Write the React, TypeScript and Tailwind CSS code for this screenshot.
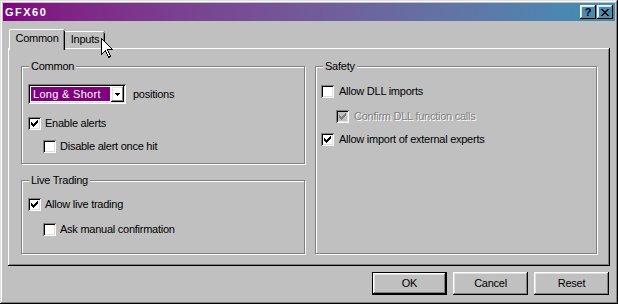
import React from 'react';

const raised = 'shadow-[inset_-1px_-1px_#000,inset_1px_1px_#fff,inset_-2px_-2px_#808080,inset_2px_2px_#dfdfdf]';
const sunken = 'shadow-[inset_1px_1px_#808080,inset_-1px_-1px_#fff,inset_2px_2px_#000,inset_-2px_-2px_#dfdfdf]';

const Check: React.FC<{ checked?: boolean; disabled?: boolean }> = ({ checked, disabled }) => (
  <span
    className={`w-[13px] h-[13px] shrink-0 flex items-center justify-center ${sunken} ${disabled ? 'bg-[#c0c0c0]' : 'bg-white'}`}
  >
    {checked && (
      <svg width="7" height="7" viewBox="0 0 7 7" shapeRendering="crispEdges">
        <path
          fill={disabled ? '#808080' : '#000'}
          d="M6 0h1v1h-1z M5 1h2v1h-2z M0 2h1v1h-1z M4 2h3v1h-3z M0 3h2v1h-2z M3 3h3v1h-3z M0 4h5v1h-5z M1 5h3v1h-3z M2 6h1v1h-1z"
        />
      </svg>
    )}
  </span>
);

const CheckRow: React.FC<{
  label: string;
  checked?: boolean;
  disabled?: boolean;
  className?: string;
}> = ({ label, checked, disabled, className = '' }) => (
  <div className={`flex items-center h-[13px] ${className}`}>
    <Check checked={checked} disabled={disabled} />
    <span className={disabled ? 'text-[#808080] [text-shadow:1px_1px_0_#fff]' : ''}>{label}</span>
  </div>
);

const GroupBox: React.FC<{ label: string; className?: string; children: React.ReactNode }> = ({
  label,
  className = '',
  children,
}) => (
  <div className={`relative border border-[#808080] shadow-[1px_1px_0_#fff,inset_1px_1px_0_#fff] ${className}`}>
    <span className="absolute -top-[7px] left-[7px] px-[2px] bg-[#c0c0c0]">{label}</span>
    {children}
  </div>
);

const Button: React.FC<{ label: string; primary?: boolean }> = ({ label, primary }) =>
  primary ? (
    <div className="w-[75px] h-[23px] border border-black">
      <div className={`w-full h-full flex items-center justify-center ${raised}`}>{label}</div>
    </div>
  ) : (
    <div className={`w-[75px] h-[23px] flex items-center justify-center ${raised}`}>{label}</div>
  );

export default function App() {
  return (
    <div className="relative w-[618px] h-[304px] bg-[#c0c0c0] p-[3px] flex flex-col font-['Liberation_Sans',Arial,sans-serif] text-[11px] leading-[13px] tracking-[-0.25px] text-black shadow-[inset_-1px_-1px_#000,inset_1px_1px_#dfdfdf,inset_-2px_-2px_#808080,inset_2px_2px_#fff]">
      {/* Title bar */}
      <div className="h-[18px] flex items-center justify-between pl-[2px] pr-[2px] bg-linear-to-r from-[#800080] to-[#3a90b4]">
        <span className="text-white font-bold tracking-[1.5px]">GFX60</span>
        <div className="flex gap-[1px]">
          <div className={`w-[16px] h-[14px] flex items-center justify-center font-bold text-[11px] leading-none tracking-normal ${raised}`}>
            ?
          </div>
          <div className={`w-[16px] h-[14px] flex items-center justify-center ${raised}`}>
            <svg width="8" height="7" viewBox="0 0 8 7" shapeRendering="crispEdges">
              <path
                fill="#000"
                d="M0 0h2v1h-2z M6 0h2v1h-2z M1 1h2v1h-2z M5 1h2v1h-2z M2 2h4v1h-4z M3 3h2v1h-2z M2 4h4v1h-4z M1 5h2v1h-2z M5 5h2v1h-2z M0 6h2v1h-2z M6 6h2v1h-2z"
              />
            </svg>
          </div>
        </div>
      </div>

      <div className="flex flex-col px-[5px]">
        {/* Tabs */}
        <div className="mt-[8px] h-[19px] flex items-end pl-[1px]">
          <div className="relative z-10 w-[56px] h-[21px] -mb-[2px] bg-[#c0c0c0] rounded-t-[2px] flex justify-center pt-[3px] shadow-[inset_1px_0_#fff,inset_0_1px_#fff,inset_-1px_0_#000,inset_-2px_0_#808080]">
            Common
          </div>
          <div className="w-[40px] h-[17px] rounded-tr-[2px] flex justify-center pt-[2px] shadow-[inset_0_1px_#fff,inset_-1px_0_#000,inset_-2px_0_#808080]">
            Inputs
          </div>
        </div>

        {/* Panel */}
        <div className="h-[218px] flex gap-[10px] pt-[18px] px-[13px] shadow-[inset_-1px_-1px_#000,inset_1px_1px_#fff,inset_-2px_-2px_#808080]">
          <div className="w-[284px] flex flex-col">
            <GroupBox label="Common" className="h-[98px] pt-[17px] pl-[6px]">
              <div className="flex items-center h-[20px]">
                <div className={`w-[98px] h-[20px] p-[2px] bg-white flex ${sunken}`}>
                  <div className="flex-1 p-[1px]">
                    <div className="h-full bg-[#800080] text-white pl-[2px] flex items-center tracking-[0.3px]">
                      Long &amp; Short
                    </div>
                  </div>
                  <div className={`w-[13px] h-full flex items-center justify-center ${raised}`}>
                    <svg width="5" height="3" viewBox="0 0 5 3" shapeRendering="crispEdges">
                      <path fill="#000" d="M0 0h5v1h-5z M1 1h3v1h-3z M2 2h1v1h-1z" />
                    </svg>
                  </div>
                </div>
                <span className="ml-[7px]">positions</span>
              </div>
              <CheckRow label="Enable alerts" checked className="mt-[13px] gap-[4px]" />
              <CheckRow label="Disable alert once hit" className="mt-[10px] ml-[15px] gap-[4px]" />
            </GroupBox>
            <GroupBox label="Live Trading" className="mt-[16px] h-[74px] pt-[17px] pl-[6px]">
              <CheckRow label="Allow live trading" checked className="gap-[4px]" />
              <CheckRow label="Ask manual confirmation" className="mt-[12px] ml-[15px] gap-[4px]" />
            </GroupBox>
          </div>
          <GroupBox label="Safety" className="w-[282px] h-[188px] pt-[18px] pl-[5px]">
            <CheckRow label="Allow DLL imports" className="gap-[5px]" />
            <CheckRow label="Confirm DLL function calls" checked disabled className="mt-[12px] ml-[15px] gap-[5px]" />
            <CheckRow label="Allow import of external experts" checked className="mt-[10px] gap-[5px]" />
          </GroupBox>
        </div>

        {/* Buttons */}
        <div className="mt-[6px] flex justify-end gap-[6px] pr-[1px]">
          <Button label="OK" primary />
          <Button label="Cancel" />
          <Button label="Reset" />
        </div>
      </div>

      {/* Mouse pointer */}
      <svg
        className="absolute left-[101px] top-[38px] pointer-events-none"
        width="13"
        height="21"
        viewBox="0 0 13 21"
        shapeRendering="crispEdges"
      >
        <path
          d="M0.5 0.5 V16.5 L4.5 12.5 L7.5 19.5 L9.5 18.5 L6.5 11.5 H11.5 Z"
          fill="#fff"
          stroke="#000"
          strokeWidth="1"
          strokeLinejoin="miter"
        />
      </svg>
    </div>
  );
}
